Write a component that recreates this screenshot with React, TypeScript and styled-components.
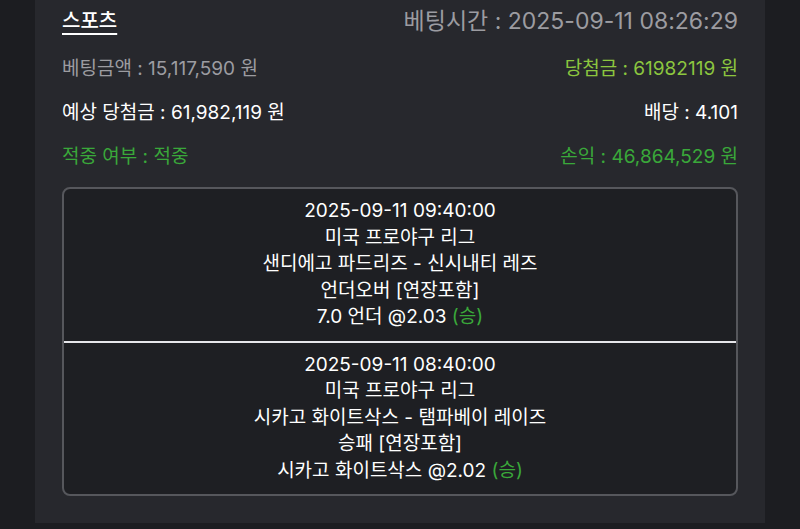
import React from 'react';
import styled, { createGlobalStyle } from 'styled-components';

const GlobalStyle = createGlobalStyle`
  html, body {
    margin: 0;
    padding: 0;
    background-color: #1c1d21;
  }
  body {
    font-family: 'Inter', 'Noto Sans CJK KR', sans-serif;
    color: #ffffff;
  }
`;

const Panel = styled.div`
  width: 730px;
  box-sizing: border-box;
  margin: 0 auto;
  padding: 4px 27px 27px;
  background-color: #27282d;
`;

const Header = styled.div`
  display: flex;
  justify-content: space-between;
  align-items: center;
  height: 30px;
`;

const Category = styled.span`
  font-size: 20px;
  font-weight: 500;
  text-decoration: underline;
  text-underline-offset: 5px;
  text-decoration-thickness: 2px;
`;

const BetTime = styled.span`
  font-size: 23px;
  color: #9c9ca1;
`;

const Rows = styled.div`
  margin-top: 10px;
  display: flex;
  flex-direction: column;
`;

const Row = styled.div`
  display: flex;
  justify-content: space-between;
  align-items: center;
  height: 44px;
`;

const Field = styled.span<{ $tone?: 'muted' | 'lime' | 'green' }>`
  font-size: 19px;
  color: ${({ $tone }) =>
    $tone === 'muted' ? '#9c9ca1' : $tone === 'lime' ? '#8cc63f' : $tone === 'green' ? '#3aa83a' : '#ffffff'};
`;

const BetBox = styled.div`
  margin-top: 11px;
  border: 2px solid #56575c;
  border-radius: 8px;
  background-color: #1e1f23;
  overflow: hidden;
`;

const BetItem = styled.div`
  padding: 9px 0 10px;
  text-align: center;
  font-size: 19px;
  line-height: 26.5px;

  & + & {
    border-top: 2px solid #e6e6ea;
  }
`;

const Result = styled.span`
  color: #3aa83a;
`;

const bets = [
  {
    time: '2025-09-11 09:40:00',
    league: '미국 프로야구 리그',
    match: '샌디에고 파드리즈 - 신시내티 레즈',
    market: '언더오버 [연장포함]',
    pick: '7.0 언더 @2.03',
  },
  {
    time: '2025-09-11 08:40:00',
    league: '미국 프로야구 리그',
    match: '시카고 화이트삭스 - 탬파베이 레이즈',
    market: '승패 [연장포함]',
    pick: '시카고 화이트삭스 @2.02',
  },
];

export default function App() {
  return (
    <>
      <GlobalStyle />
      <Panel>
        <Header>
          <Category>스포츠</Category>
          <BetTime>베팅시간 : 2025-09-11 08:26:29</BetTime>
        </Header>
        <Rows>
          <Row>
            <Field $tone="muted">베팅금액 : 15,117,590 원</Field>
            <Field $tone="lime">당첨금 : 61982119 원</Field>
          </Row>
          <Row>
            <Field>예상 당첨금 : 61,982,119 원</Field>
            <Field>배당 : 4.101</Field>
          </Row>
          <Row>
            <Field $tone="green">적중 여부 : 적중</Field>
            <Field $tone="green">손익 : 46,864,529 원</Field>
          </Row>
        </Rows>
        <BetBox>
          {bets.map((b) => (
            <BetItem key={b.time}>
              <div>{b.time}</div>
              <div>{b.league}</div>
              <div>{b.match}</div>
              <div>{b.market}</div>
              <div>
                {b.pick} <Result>(승)</Result>
              </div>
            </BetItem>
          ))}
        </BetBox>
      </Panel>
    </>
  );
}
